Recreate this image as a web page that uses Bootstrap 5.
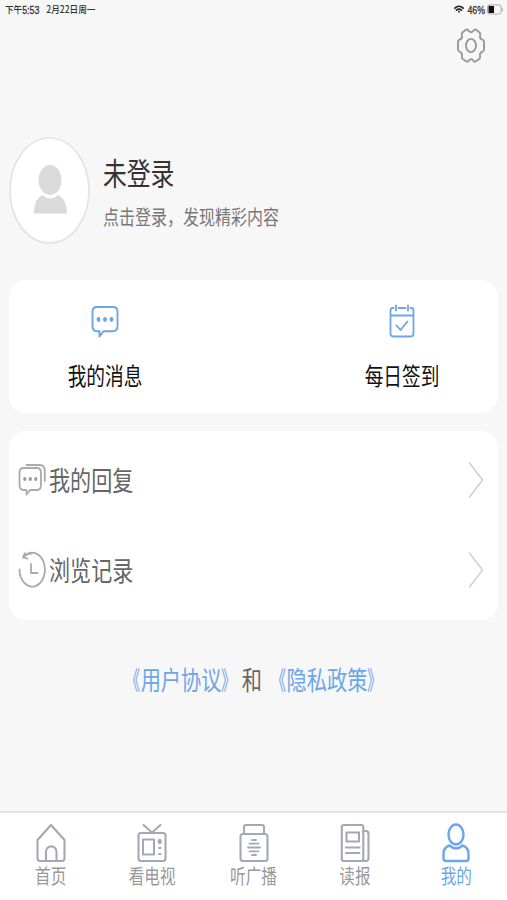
<!DOCTYPE html>
<html lang="zh-CN">
<head>
<meta charset="utf-8">
<meta name="viewport" content="width=device-width, initial-scale=1">
<title>我的</title>
<link href="https://cdn.jsdelivr.net/npm/bootstrap@5.3.0/dist/css/bootstrap.min.css" rel="stylesheet">
<style>
body{background:#f7f7f7;font-family:"Liberation Sans","Noto Sans CJK SC",sans-serif;height:900px;overflow:hidden;color:#333}
svg{display:block;flex:none;fill:none;stroke-linecap:round;stroke-linejoin:round}
a{text-decoration:none;color:inherit}
.tall{display:inline-block;line-height:1;white-space:pre;transform:scaleY(1.28);font-family:"Noto Sans CJK SC",sans-serif}
.status-bar{height:20px;padding:0 4px 1px 5px;font-size:8.6px;color:#333}
.status-bar .tall{transform:scaleY(1.12);font-weight:500}
.status-bar .latin{font-family:"Liberation Sans",sans-serif;font-size:8.8px;font-weight:400;-webkit-text-stroke:.25px #333;padding-top:2px;transform:scaleY(1.2)}
.status-bar .date{margin-left:7px}
.status-bar .battery-level{margin:0 2px 0 3px}
.settings{height:50px;padding-right:22px}
.profile{height:210px;padding:14px 0 0 9px}
.avatar{width:81px;height:107px;margin-top:53px}
.profile-text{margin:76px 0 0 13px}
.profile-name{font-size:23.8px;color:#333}
.profile-hint{font-size:16px;color:#777}
.panel{border:0;border-radius:17px;margin:0 9px;background:#fff}
.quick{height:133px;margin-bottom:18px}
.quick a{width:192px;padding-top:24px;font-size:18.7px;color:#111}
.quick .tall{margin-top:28px}
.records{height:189px;padding:5px 0}
.records a{height:90px;padding:0 14px 0 9px;font-size:21.1px;color:#666}
.records svg{margin-top:-1px}
.records .tall{margin:0 0 0 3px}
.terms{margin-top:50px;padding-left:1px;font-size:20.2px;color:#666;line-height:1}
.terms .open,.terms .close{display:inline-block;transform:scaleX(.75);transform-origin:right}
.terms .close{transform-origin:left}
.blue{color:#6ca5e8}
.tab-bar{height:89px;border-top:2px solid #e4e4e4;background:#fff;color:#999;font-size:15.6px}
.tab-bar a{padding-top:10px}
.tab-bar svg{stroke:#a5a7b5;stroke-width:2.1}
.tab-bar .tall{margin-top:5px}
.tab-bar .current{color:#6ca5e8}
.tab-bar .current svg{stroke:#6ca5e8;stroke-width:2.4}
</style>
<script src="https://cdn.jsdelivr.net/npm/bootstrap@5.3.0/dist/js/bootstrap.bundle.min.js"></script>
</head>
<body class="d-flex flex-column">
<header class="status-bar d-flex align-items-center justify-content-between">
  <div class="d-flex align-items-center"><span class="tall">下午</span><span class="tall latin">5:53</span><span class="tall date">2月22日周一</span></div>
  <div class="d-flex align-items-center">
    <svg width="10" height="9" viewBox="0 0 10 9" stroke="#222" stroke-width="1.6" stroke-linecap="butt"><path d="M.8 3.2Q5-.7 9.2 3.2M2.4 5.2Q5 3 7.6 5.2"/><path d="M3.7 6.4Q5 5.3 6.3 6.4L5 8Z" fill="#333" stroke="none"/></svg>
    <span class="tall latin battery-level">46%</span>
    <svg width="16" height="11" viewBox="0 0 16 11"><rect x=".5" y="1" width="13.500" height="9" rx="2" stroke="#999" stroke-width=".8"/><path d="M1.500 2H7V9H1.500Z" fill="#111"/><path d="M15.300 4V7" stroke="#aaa"/></svg>
  </div>
</header>
<div class="settings d-flex justify-content-end">
  <a href="#" aria-label="设置"><svg class="mt-2" width="28" height="36" viewBox="0 0 28 36" stroke="#999" stroke-width="1.9"><path d="M9.2 1.6Q11 1.3 11.8 3.2Q14 5.4 16.2 3.2Q17 1.3 18.8 1.6L22.6 4.5Q23.7 5.6 23 7.5Q22.6 11 25.5 11.7Q27 12.3 27 14V21.2Q27 23.2 25.5 23.7Q22.5 24.6 23 28Q23.6 30 22.3 31L18.6 33.5Q17.1 34.3 16 32.3Q14 30 12 32.3Q10.9 34.3 9.4 33.5L5.7 31Q4.4 30 5 28Q5.500 24.6 2.5 23.7Q1 23.2 1 21.2V14Q1 12.3 2.5 11.7Q5.4 11 5 7.5Q4.3 5.6 5.4 4.5Z"/><ellipse cx="14" cy="17.5" rx="5" ry="6.6"/></svg></a>
</div>
<section class="profile d-flex">
  <svg class="avatar" viewBox="0 0 81 107"><ellipse cx="40.5" cy="53.5" rx="39.5" ry="52.5" fill="#fff" stroke="#e4e4e4" stroke-width="1.7"/><ellipse cx="41" cy="43" rx="11.5" ry="15" fill="#dadada"/><path d="M25 76.500V74Q26 61 33.500 58Q41 65 49 58Q57 62 58 74V76.500Z" fill="#dadada"/></svg>
  <div class="profile-text d-flex flex-column align-items-start">
    <span class="tall profile-name">未登录</span>
    <span class="tall profile-hint mt-4">点击登录，发现精彩内容</span>
  </div>
</section>
<section class="card panel quick flex-row justify-content-between">
  <a href="#" class="d-flex flex-column align-items-center">
    <svg width="28" height="34" viewBox="0 0 28 34" stroke="#6ca5e8" stroke-width="1.9"><path d="M6 3H22Q26.500 3 26.500 8V22Q26.500 27.200 22 27.200H12.500L8.500 32.500V27.200H6Q1.500 27.200 1.500 22V8Q1.500 3 6 3Z"/><g fill="#6ca5e8" stroke="none"><ellipse cx="7.500" cy="15.500" rx="1.900" ry="2.400"/><ellipse cx="14" cy="15.500" rx="1.900" ry="2.400"/><ellipse cx="20.500" cy="15.500" rx="1.900" ry="2.400"/></g></svg>
    <span class="tall">我的消息</span>
  </a>
  <a href="#" class="d-flex flex-column align-items-center">
    <svg width="26" height="34" viewBox="0 0 26 34" stroke="#6ca5e8" stroke-width="1.800"><path d="M4.500 4H3.500Q1.500 4 1.500 7V29Q1.500 32.500 4 32.500H22Q24.500 32.500 24.500 29V7Q24.500 4 22.500 4H21.500M9.500 4H16.500M1.500 11.500H24.500M7 1.500V6.500M19 1.500V6.500M7.500 21.500L11.500 26L18.500 17.500"/></svg>
    <span class="tall">每日签到</span>
  </a>
</section>
<section class="card panel records">
  <a href="#" class="d-flex align-items-center">
    <svg width="28" height="34" viewBox="0 0 28 34" stroke="#aaa" stroke-width="1.800"><path d="M5.500 5H19Q23 5 23 10V22Q23 27 19 27H12L8.500 31.500V27H5.500Q1.500 27 1.500 22V10Q1.500 5 5.500 5ZM8.500 2H21.500Q26.800 2 26.800 8V18"/><g fill="#999" stroke="none"><ellipse cx="6.800" cy="16" rx="1.600" ry="2"/><ellipse cx="12.300" cy="16" rx="1.600" ry="2"/><ellipse cx="17.800" cy="16" rx="1.600" ry="2"/></g></svg>
    <span class="tall">我的回复</span>
    <svg class="ms-auto" width="16" height="36" viewBox="0 0 16 36" stroke="#ccc" stroke-width="1.300"><path d="M1.500 1L14.500 18L1.500 35"/></svg>
  </a>
  <a href="#" class="d-flex align-items-center">
    <svg width="28" height="38" viewBox="0 0 28 38" stroke="#aaa" stroke-width="1.800"><path d="M1.500 18.500A12.700 17 0 1 0 5.500 6.200Q9 2.500 13.500 2.500M6.800 2.200L5 6.500L9.500 7.600M13 13V22H19.500"/></svg>
    <span class="tall">浏览记录</span>
    <svg class="ms-auto" width="16" height="36" viewBox="0 0 16 36" stroke="#ccc" stroke-width="1.300"><path d="M1.500 1L14.500 18L1.500 35"/></svg>
  </a>
</section>
<div class="terms d-flex justify-content-center">
  <a href="#" class="tall blue"><span class="open">《</span>用户协议<span class="close">》</span></a><span class="tall">和 </span><a href="#" class="tall blue"><span class="open">《</span>隐私政策<span class="close">》</span></a>
</div>
<nav class="tab-bar mt-auto d-flex">
  <a href="#" class="flex-fill w-100 d-flex flex-column align-items-center">
    <svg width="30" height="40" viewBox="0 0 30 40"><path d="M15 2L28.500 17V35Q28.500 38 26 38H4Q1.500 38 1.500 35V17ZM10 38V29C10 21.500 20.500 21.500 20.500 29V38"/></svg>
    <span class="tall">首页</span>
  </a>
  <a href="#" class="flex-fill w-100 d-flex flex-column align-items-center">
    <svg width="30" height="40" viewBox="0 0 30 40"><rect x="1.500" y="10" width="27" height="28" rx="2.500"/><path d="M6.500 2L15 9.500L23.500 2M6 16.500H17V31.500H6ZM22 25H23.500M22 31H23.500"/><ellipse cx="22.700" cy="18.500" rx="1.100" ry="1.600" fill="#a5a7b5"/></svg>
    <span class="tall">看电视</span>
  </a>
  <a href="#" class="flex-fill w-100 d-flex flex-column align-items-center">
    <svg width="30" height="40" viewBox="0 0 30 40"><path d="M5 11V4Q5 2 7 2H23Q25 2 25 4V11"/><rect x="1.500" y="11" width="27" height="27" rx="2.500"/><path stroke-width="1.800" d="M13 17H17M10.500 20.700H19.500M9 24.500H21M10.500 28.300H19.500M13 32H17"/></svg>
    <span class="tall">听广播</span>
  </a>
  <a href="#" class="flex-fill w-100 d-flex flex-column align-items-center">
    <svg width="30" height="40" viewBox="0 0 30 40"><rect x="1.800" y="2" width="21.500" height="36" rx="2"/><path d="M23.300 8H26Q28.500 8 28.500 11V35Q28.500 38 26 38H21M6.500 9.500H19V18.500H6.500ZM6 24.500H19.500M6 30H19.500"/></svg>
    <span class="tall">读报</span>
  </a>
  <a href="#" class="flex-fill w-100 d-flex flex-column align-items-center current">
    <svg width="28" height="40" viewBox="0 0 28 40"><ellipse cx="14" cy="11.500" rx="7.500" ry="10"/><path d="M7.500 22.500Q1.500 24.500 1.500 31V35.500Q1.500 38 4 38H24Q26.500 38 26.500 35.500V31Q26.500 24.500 20.500 22.500Q14 28.500 7.500 22.500Z"/></svg>
    <span class="tall">我的</span>
  </a>
</nav>
</body>
</html>
